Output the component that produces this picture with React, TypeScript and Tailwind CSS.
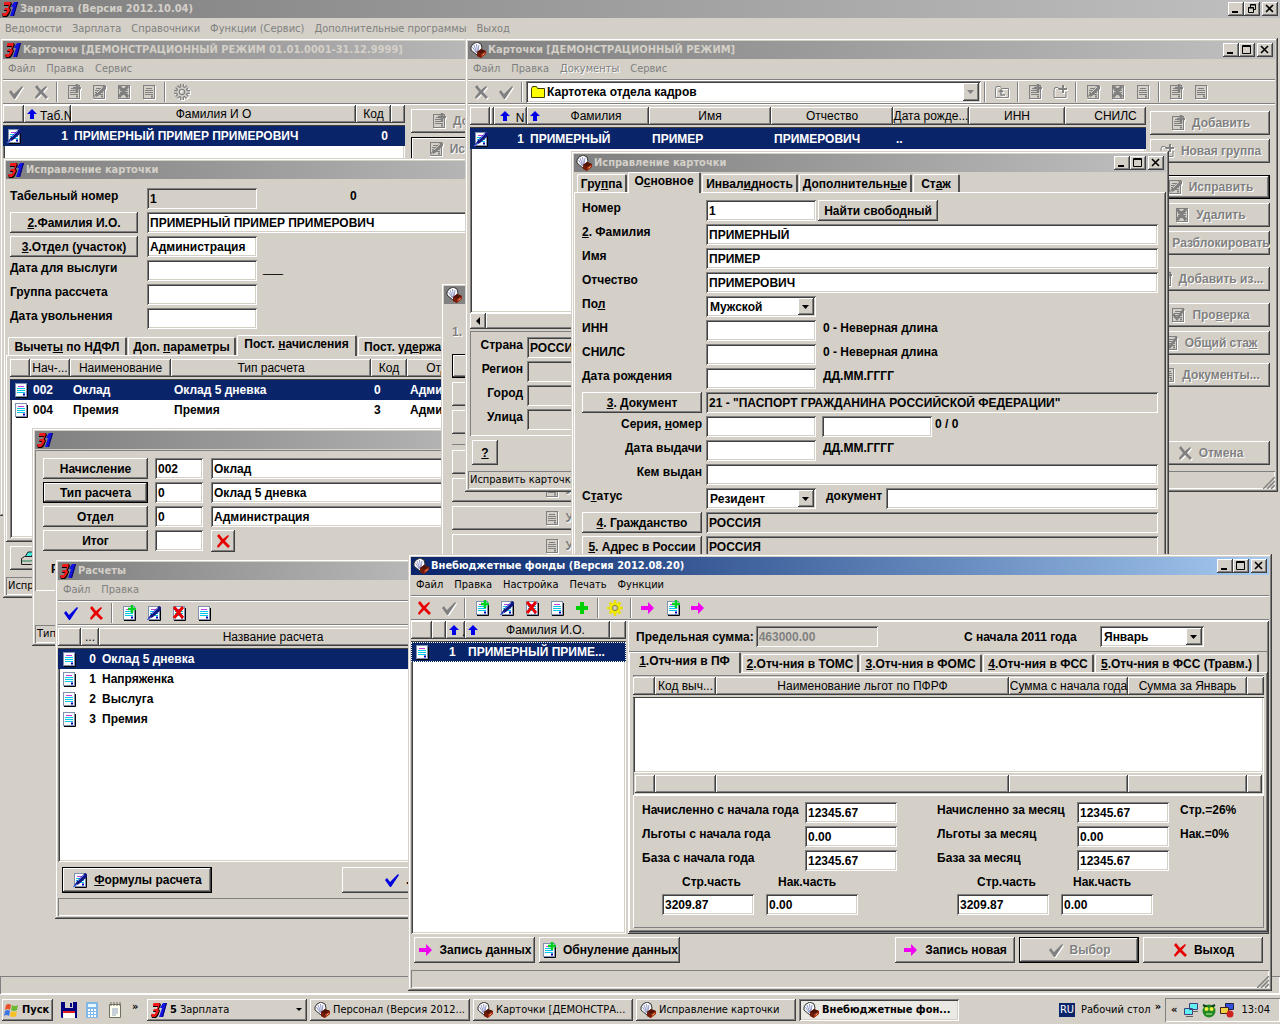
import React, { useId } from "react";

const TAHOMA = "font-['DejaVu_Sans_Condensed','DejaVu_Sans',sans-serif] text-[11px]";
const RAISED = "bg-[#d4d0c8] shadow-[inset_-1px_-1px_#404040,inset_1px_1px_#fff,inset_-2px_-2px_#808080]";
const FOCUSED = "bg-[#d4d0c8] border border-black shadow-[inset_-1px_-1px_#404040,inset_1px_1px_#fff,inset_-2px_-2px_#808080]";
const SUNKEN = "shadow-[inset_1px_1px_#808080,inset_-1px_-1px_#fff,inset_2px_2px_#404040,inset_-2px_-2px_#d4d0c8]";
const THIN = "shadow-[inset_1px_1px_#808080,inset_-1px_-1px_#fff]";
const OFF = "text-[#808080] [text-shadow:1px_1px_#fff]";

type IconName =
  | "check" | "cross" | "doc" | "docPlus" | "docPen" | "docCross" | "docCheck" | "plus" | "gear"
  | "arrow" | "folder" | "folderUp" | "folderPlus" | "up" | "printer";

function Icon({ name, off = false, className = "" }: { name: IconName; off?: boolean; className?: string }) {
  const c = (color: string) => (off ? "#808080" : color);
  const page = (
    <g>
      {!off && <path d="M3 15.500H14.500V3" fill="none" stroke="#000" />}
      <rect x="2.500" y="1.500" width="11" height="13" fill={off ? "#d4d0c8" : "#fff"} stroke={off ? "#808080" : "#8090b0"} />
      <path d="M5 4.500h6" stroke={c("#c040e0")} />
      <path d="M4 6.500h8M4 8.500h8M4 10.500h8" stroke={c("#00c8e8")} />
      <path d="M10 12.500h2" stroke={c("#0000c0")} strokeWidth="2" />
    </g>
  );
  const teeth = "M8 0v4M8 12v4M0 8h4M12 8h4M2.500 2.500l3 3M10.500 10.500l3 3M13.500 2.500l-3 3M5.500 10.500l-3 3";
  const shapes: Record<IconName, React.ReactNode> = {
    check: <path d="M1 8l2-2 3 4 8-8 1 1-8 12H6z" fill={c("#0000e0")} />,
    cross: <path d="M2 3l2-2 4 5 5-4 1 1-4 5 5 5-2 2-5-5-5 5-1-2 4-5z" fill={c("#e80000")} />,
    doc: page,
    docPlus: <g>{page}<path d="M11 0v8M7 4h8" stroke={c("#00d020")} strokeWidth="2.500" /></g>,
    docPen: (
      <g>
        {page}
        <path d="M1 15l4-6 8-8 2 1 0 3-8 7z" fill={c("#101880")} />
        <path d="M6 9l6-6M1 15l4-3" stroke={off ? "#d4d0c8" : "#5070ff"} />
      </g>
    ),
    docCross: <g>{page}<path d="M3 2l9 11M12 2L3 13" stroke={c("#e80000")} strokeWidth="3" /></g>,
    docCheck: <g>{page}<path d="M3 7l4 5 7-10" fill="none" stroke={c("#0000e0")} strokeWidth="2.500" /></g>,
    plus: <path d="M6 2h4v4h4v4h-4v4H6v-4H2V6h4z" fill={c("#00d000")} />,
    gear: off ? (
      <g fill="none">
        <path d={teeth} stroke="#808080" strokeWidth="4" />
        <circle cx="8" cy="8" r="4" stroke="#808080" strokeWidth="4" />
        <path d={teeth} stroke="#d4d0c8" strokeWidth="1.500" />
        <circle cx="8" cy="8" r="4" stroke="#d4d0c8" strokeWidth="1.500" />
      </g>
    ) : (
      <g fill="none">
        <path d={teeth} stroke="#e8e000" strokeWidth="2.500" />
        <circle cx="8" cy="8" r="4" stroke="#f0e800" strokeWidth="3" />
        <circle cx="8" cy="8" r="2.500" stroke="#808040" strokeWidth="1" />
      </g>
    ),
    arrow: <path d="M1 6h7V2l6 6-6 6V10H1z" fill={c("#f000f0")} />,
    folder: <path d="M1.500 13.500v-9l1-2h4l1 2h7v9z" fill={off ? "#d4d0c8" : "#ffff00"} stroke={off ? "#808080" : "#404000"} />,
    folderUp: (
      <g fill="none" stroke="#808080">
        <path d="M1.500 13.500v-9l1-2h4l1 2h7v9z" />
        <path d="M7 6v5h4M5 8l2-2 2 2" strokeWidth="1.500" />
      </g>
    ),
    folderPlus: (
      <g fill="none" stroke="#808080">
        <path d="M8 5.500H7l-1-2H3l-1 2v8h12V8" />
        <path d="M11 1v8M7 5h8" strokeWidth="2" />
      </g>
    ),
    up: <path d="M8 3l5 5H10v5H6V8H3z" fill="#0000e8" />,
    printer: (
      <g stroke="#202020">
        <path d="M5 7l3-5h6l-3 5z" fill="#40f0e0" />
        <path d="M1.500 8.500l3-2h9l1 2v4l-3 2h-10z" fill="#d4d0c8" />
        <path d="M2 11h9l3-2" fill="none" stroke="#208050" />
      </g>
    ),
  };
  return (
    <svg viewBox="0 0 16 16" aria-hidden="true" className={`size-4 shrink-0 ${off ? "drop-shadow-[1px_1px_0_#fff]" : ""} ${className}`}>
      {shapes[name]}
    </svg>
  );
}

function Logo({ kind }: { kind: "pay" | "cards" }) {
  if (kind === "pay")
    return (
      <svg viewBox="0 0 16 16" aria-hidden="true" className="size-4 shrink-0">
        <path d="M2 3l2-2h5l1 2-2 4 1 2-2 5-2 2H1l-1-3h4l1-3H2l1-2h3l1-3H2z" fill="#000" />
        <path d="M2 2l1-1h5l1 1-2 5 1 2-2 4-2 2H1l-1-3h4l1-3H2l1-2h3l1-3H2z" fill="#f01818" />
        <path d="M10 4l2-3h4l-4 14H8l3-9H9z" fill="#1414e0" />
        <path d="M15 1h1l-4 14h-1z" fill="#000060" />
      </svg>
    );
  return (
    <svg viewBox="0 0 16 16" aria-hidden="true" className="size-4 shrink-0">
      <path d="M1 8l0-3 2-3 4-2 4 2 1 4-3 6-2 1z" fill="#fff" stroke="#303030" />
      <path d="M2.500 5l4 6M4 3l3 8M6.500 2l1 8M9 3l-1 6" stroke="#9098c8" />
      <path d="M7 10l4-3 5 2v3l-5 4-4-2z" fill="#a02c10" />
      <path d="M7 10l4-3 5 2-5 3z" fill="#501408" />
      <path d="M7 10v4l4 2v-4z" fill="#701c08" />
      <path d="M12.500 13l2-1.500" stroke="#ffc080" />
    </svg>
  );
}

function Controls({ restore = false }: { restore?: boolean }) {
  const btn = `h-3.5 w-4 p-0 flex items-center justify-center ${RAISED}`;
  return (
    <div className="ml-auto flex shrink-0 pr-0.5">
      <button className={btn} aria-label="Свернуть">
        <svg viewBox="0 0 10 10" className="size-2.5"><path d="M1 8h6" stroke="#000" strokeWidth="2" /></svg>
      </button>
      <button className={btn} aria-label="Развернуть">
        <svg viewBox="0 0 10 10" className="size-2.5" fill="none" stroke="#000">
          {restore ? <path d="M3.500 3V.5h5v5H7M3 1h6M1.500 3.500h5v5h-5zM1 4h6" /> : <path d="M.5 .5h8v8h-8zM0 1.500h9" />}
        </svg>
      </button>
      <button className={`ml-0.5 ${btn}`} aria-label="Закрыть">
        <svg viewBox="0 0 10 10" className="size-2.5"><path d="M1 1l7 7M8 1L1 8" stroke="#000" strokeWidth="1.600" /></svg>
      </button>
    </div>
  );
}

function TitleBar({ logo, title, active = false, restore = false }: {
  logo: "pay" | "cards"; title: string; active?: boolean; restore?: boolean;
}) {
  return (
    <header
      className={`flex h-[18px] shrink-0 items-center gap-0.5 overflow-hidden whitespace-nowrap pl-0.5 font-bold ${TAHOMA} ${
        active ? "bg-linear-to-r from-[#0a246a] to-[#a6caf0] text-white" : "bg-linear-to-r from-[#808080] to-[#c0c0c0] text-[#d4d0c8]"
      }`}
    >
      <Logo kind={logo} />
      <h2>{title}</h2>
      <Controls restore={restore} />
    </header>
  );
}

function Window({ className, children }: { className: string; children: React.ReactNode }) {
  return (
    <section className={`absolute flex flex-col overflow-hidden bg-[#d4d0c8] p-[3px] shadow-[inset_-1px_-1px_#404040,inset_1px_1px_#d4d0c8,inset_-2px_-2px_#808080,inset_2px_2px_#fff] ${className}`}>
      {children}
    </section>
  );
}

function Menu({ items, active = false, etched, className = "h-5 gap-[11px]" }: { items: string[]; active?: boolean; etched?: string; className?: string }) {
  return (
    <nav className={`flex shrink-0 items-center px-[5px] ${TAHOMA} ${className}`}>
      {items.map((i) => (
        <button key={i} className={active ? "text-black" : i === etched ? OFF : "text-[#808080]"}>{i}</button>
      ))}
    </nav>
  );
}

const BAR = "flex h-[25px] shrink-0 items-center border-y border-t-[#808080] border-b-[#808080] shadow-[inset_0_1px_#fff,0_1px_#fff] mb-px";

function Tool({ name, off = false, label }: { name: IconName; off?: boolean; label: string }) {
  return (
    <button aria-label={label} className="flex h-[22px] w-[25px] shrink-0 items-center justify-center">
      <Icon name={name} off={off} />
    </button>
  );
}
const Sep = () => <i className="mx-[3px] h-5 w-0.5 shrink-0 border-l border-[#808080] bg-white" />;

function Btn({ icon, off = false, focus = false, className = "", children }: {
  icon?: IconName; off?: boolean; focus?: boolean; className?: string; children?: React.ReactNode;
}) {
  return (
    <button className={`flex shrink-0 items-center justify-center gap-1.5 overflow-hidden whitespace-nowrap font-bold ${focus ? FOCUSED : RAISED} ${off ? OFF : ""} ${className}`}>
      {icon && <Icon name={icon} off={off} />}
      {children && <span>{children}</span>}
    </button>
  );
}

function Field({ value = "", gray = false, off = false, label, id, className = "w-[110px]" }: {
  value?: string; gray?: boolean; off?: boolean; label?: string; id?: string; className?: string;
}) {
  return (
    <input
      id={id}
      aria-label={label}
      defaultValue={value}
      readOnly={gray}
      className={`h-[21px] min-w-0 rounded-none px-[3px] font-bold ${SUNKEN} ${gray ? "bg-[#d4d0c8]" : "bg-white"} ${off ? "text-[#808080]" : ""} ${className}`}
    />
  );
}

function Select({ id, label, value, className = "w-[110px]" }: { id?: string; label?: string; value: string; className?: string }) {
  return (
    <div className={`relative h-[21px] ${className}`}>
      <select id={id} aria-label={label} className={`size-full appearance-none rounded-none bg-white pl-1 font-bold ${SUNKEN}`}>
        <option>{value}</option>
      </select>
      <i className={`pointer-events-none absolute top-0.5 right-0.5 flex h-[17px] w-4 items-center justify-center ${RAISED}`}>
        <svg viewBox="0 0 8 4" className="h-1 w-2"><path d="M0 0h7L3.500 4z" /></svg>
      </i>
    </div>
  );
}

/* A 24px form line: caption on the left, controls on the right. */
function Line({ caption, button = false, right = false, cap, children }: {
  caption: React.ReactNode; button?: boolean; right?: boolean; cap: string; children: (id: string) => React.ReactNode;
}) {
  const id = useId();
  return (
    <div className="flex h-6 shrink-0 items-start">
      <div className={`flex shrink-0 ${cap} ${right ? "justify-end" : ""}`}>
        {button ? (
          <Btn className="h-[21px] w-full">{caption}</Btn>
        ) : (
          <label htmlFor={id} className="leading-4 whitespace-nowrap">{caption}</label>
        )}
      </div>
      {children(id)}
    </div>
  );
}

function Status({ text = "", grip = false, className = "" }: { text?: string; grip?: boolean; className?: string }) {
  return (
    <footer className={`flex h-[18px] shrink-0 items-center overflow-hidden pl-0.5 whitespace-nowrap ${TAHOMA} ${THIN} ${className}`}>
      {text}
      {grip && (
        <svg viewBox="0 0 12 12" aria-hidden="true" className="ml-auto size-3 self-end">
          <path d="M0 12L12 0M4 12l8-8M8 12l4-4" stroke="#808080" strokeWidth="1.500" />
        </svg>
      )}
    </footer>
  );
}

type Col = { w: string; head?: React.ReactNode; align?: string };

function Grid({ cols, rows, selected = 0, icon, className = "", height = "h-5", dotted = false }: {
  cols: Col[]; rows: React.ReactNode[][]; selected?: number; icon?: IconName; className?: string; height?: string; dotted?: boolean;
}) {
  return (
    <div className={`overflow-hidden bg-white ${SUNKEN} ${className}`}>
      <table className="w-full table-fixed border-separate border-spacing-0">
        <colgroup>{cols.map((c, i) => <col key={i} className={c.w} />)}</colgroup>
        <thead>
          <tr>
            {cols.map((c, i) => (
              <th key={i} className={`h-[18px] overflow-hidden p-0 text-center font-normal whitespace-nowrap ${RAISED}`}>{c.head}</th>
            ))}
          </tr>
          <tr aria-hidden="true"><td colSpan={cols.length} className="h-[3px] bg-[#d4d0c8] p-0 shadow-[inset_0_-1px_#404040]" /></tr>
        </thead>
        <tbody>
          {rows.map((r, y) => (
            <tr key={y} className={y === selected ? `bg-[#0a246a] text-white ${dotted ? "outline-1 -outline-offset-1 outline-dotted outline-white" : ""}` : ""}>
              {cols.map((c, i) => (
                <td key={i} className={`p-0 px-[3px] font-bold whitespace-nowrap ${height} ${c.align ?? ""}`}>
                  {i === 0 && icon ? <Icon name={icon} className="block" /> : r[i - 1]}
                </td>
              ))}
            </tr>
          ))}
        </tbody>
      </table>
    </div>
  );
}

function Tab({ active = false, className, children }: { active?: boolean; className: string; children: React.ReactNode }) {
  return (
    <button
      role="tab"
      aria-selected={active}
      className={`shrink-0 overflow-hidden rounded-t-[2px] border-t border-r-2 border-l border-t-white border-r-[#505050] border-l-white bg-[#d4d0c8] text-center font-bold whitespace-nowrap ${
        active ? "z-10 -mb-px h-[21px] pb-1" : "h-[18px]"
      } ${className}`}
    >
      {children}
    </button>
  );
}

const UpMark = () => <Icon name="up" className="inline-block size-3 align-[-2px]" />;

function PayCards() {
  return (
    <Window className="top-[38px] left-0 h-[478px] w-[536px]">
      <TitleBar logo="pay" title="Карточки [ДЕМОНСТРАЦИОННЫЙ РЕЖИМ 01.01.0001-31.12.9999]" />
      <Menu items={["Файл", "Правка", "Сервис"]} />
      <div className={BAR}>
        <Tool name="check" off label="Выбор" />
        <Tool name="cross" off label="Отмена" />
        <Sep />
        <Tool name="docPlus" off label="Добавить" />
        <Tool name="docPen" off label="Исправить" />
        <Tool name="docCross" off label="Удалить" />
        <Tool name="doc" off label="Просмотр" />
        <Sep />
        <Tool name="gear" off label="Настройка" />
      </div>
      <div className="flex min-h-0 flex-1 gap-1.5">
        <Grid
          className="w-[402px]"
          icon="docPen"
          cols={[
            { w: "w-[21px]" },
            { w: "w-[47px]", head: <><UpMark />Таб.N</>, align: "text-right" },
            { w: "w-[285px]", head: "Фамилия И О" },
            { w: "w-[35px]", head: "Код", align: "text-right" },
            { w: "w-[14px]" },
          ]}
          rows={[["1", "ПРИМЕРНЫЙ ПРИМЕР ПРИМЕРОВИЧ", "0", ""]]}
        />
        <div className="flex flex-col gap-1 pt-1">
          <Btn icon="docPlus" off className="h-6 w-[120px]">Добавить</Btn>
          <Btn icon="docPen" off focus className="h-6 w-[120px]">Исправить</Btn>
        </div>
      </div>
    </Window>
  );
}

function PayCardEdit() {
  const cap = "w-[128px] mr-[9px]";
  return (
    <Window className="top-[158px] left-[3px] h-[440px] w-[560px]">
      <TitleBar logo="pay" title="Исправление карточки" />
      <div className="flex flex-col pt-[9px] pl-1 font-bold">
        <Line cap={cap} caption="Табельный номер">
          {(id) => <><Field id={id} value="1" gray /><span className="ml-[93px] leading-4">0</span></>}
        </Line>
        <Line cap={cap} button caption={<><u>2</u>.Фамилия И.О.</>}>
          {() => <Field label="Фамилия И.О." value="ПРИМЕРНЫЙ ПРИМЕР ПРИМЕРОВИЧ" className="w-[340px]" />}
        </Line>
        <Line cap={cap} button caption={<><u>3</u>.Отдел (участок)</>}>
          {() => <Field label="Отдел" value="Администрация" />}
        </Line>
        <Line cap={cap} caption="Дата для выслуги">{(id) => <><Field id={id} /><span className="ml-1.5 leading-4 font-normal">___</span></>}</Line>
        <Line cap={cap} caption="Группа рассчета">{(id) => <Field id={id} />}</Line>
        <Line cap={cap} caption="Дата увольнения">{(id) => <Field id={id} />}</Line>
      </div>
      <div role="tablist" className="flex h-[23px] shrink-0 items-end gap-px pl-0.5">
        <Tab className="w-[119px]">Вычет<u>ы</u> по НДФЛ</Tab>
        <Tab className="w-[108px]">Доп. <u>п</u>араметры</Tab>
        <Tab active className="w-[120px]">Пост. <u>н</u>ачисления</Tab>
        <Tab className="w-[112px]">Пост. уд<u>е</u>ржания</Tab>
      </div>
      <div className={`flex h-[187px] shrink-0 p-1 ${RAISED}`}>
        <Grid
          className="flex-1"
          icon="doc"
          cols={[
            { w: "w-[20px]" },
            { w: "w-[40px]", head: "Нач-..." },
            { w: "w-[101px]", head: "Наименование" },
            { w: "w-[200px]", head: "Тип расчета" },
            { w: "w-[36px]", head: "Код" },
            { w: "w-[73px]", head: "Отдел" },
            { w: "w-auto" },
          ]}
          rows={[
            ["002", "Оклад", "Оклад 5 дневка", "0", "Администрация", ""],
            ["004", "Премия", "Премия", "3", "Администрация", ""],
          ]}
        />
      </div>
      <div className="flex flex-1 items-start px-1 pt-1"><Btn icon="printer" className="h-6 w-9" /></div>
      <Status text="Исправить карточку" />
    </Window>
  );
}

function ChargeDialog() {
  const row = "flex h-6 shrink-0 gap-[7px]";
  const lines = [
    ["Начисление", "002", "Оклад"],
    ["Тип расчета", "0", "Оклад 5 дневка"],
    ["Отдел", "0", "Администрация"],
  ];
  return (
    <Window className="top-[428px] left-[32px] h-[218px] w-[520px]">
      <TitleBar logo="pay" title="" />
      <div className={`mt-px flex h-[141px] shrink-0 flex-col pt-2 pl-2 font-bold ${THIN}`}>
        {lines.map(([name, code, text], i) => (
          <div key={name} className={row}>
            <Btn focus={i === 1} className="h-[21px] w-[105px]">{name}</Btn>
            <Field label={`${name}: код`} value={code} className="w-12" />
            <Field label={name} value={text} className="ml-px w-[236px]" />
          </div>
        ))}
        <div className={row}>
          <Btn className="h-[21px] w-[105px]">Итог</Btn>
          <Field label="Итог" className="w-12" />
          <button aria-label="Очистить" className={`ml-px flex h-[22px] w-6 items-center justify-center ${RAISED}`}><Icon name="cross" /></button>
        </div>
        <p className="mt-2 pl-2">Расчет</p>
      </div>
      <Status text="Тип расчета" className="mt-auto" />
    </Window>
  );
}

function StaffWindow() {
  return (
    <Window className="top-[283px] left-[441px] h-[320px] w-[300px]">
      <TitleBar logo="cards" title="" />
      <div className="flex flex-col px-2">
        <p className={`mt-5 mb-3.5 font-bold leading-4 ${OFF}`}>1.</p>
        <Btn focus className="h-6 w-[232px]" />
        <div className="mt-1 flex flex-col gap-1">
          {[0, 1].map((i) => <Btn key={i} className="h-6 w-[232px]" />)}
        </div>
        <div className="mt-2.5 flex w-[232px] flex-col gap-1 border-t border-[#808080] pt-[5px]">
          {[0, 1, 2, 3].map((i) => <Btn key={i} icon="doc" off className="h-6 w-[232px]">Учет</Btn>)}
        </div>
      </div>
    </Window>
  );
}

function PersonnelCards() {
  const b = "h-6 w-[120px]";
  return (
    <Window className="top-[38px] right-0.5 left-[465px] h-[454px]">
      <TitleBar logo="cards" title="Карточки [ДЕМОНСТРАЦИОННЫЙ РЕЖИМ]" />
      <Menu items={["Файл", "Правка", "Документы", "Сервис"]} etched="Документы" />
      <div className={BAR}>
        <Tool name="cross" off label="Отмена" />
        <Tool name="check" off label="Выбор" />
        <Sep />
        <label className={`relative flex h-[22px] min-w-0 flex-1 items-center bg-white pl-1 ${SUNKEN}`}>
          <Icon name="folder" />
          <select aria-label="Картотека" className="min-w-0 flex-1 appearance-none pl-px font-bold"><option>Картотека отдела кадров</option></select>
          <i className={`pointer-events-none absolute top-0.5 right-0.5 flex h-[18px] w-4 items-center justify-center ${RAISED}`}>
            <svg viewBox="0 0 8 4" className="h-1 w-2"><path d="M0 0h7L3.500 4z" fill="#808080" /></svg>
          </i>
        </label>
        <div className="flex w-[294px] shrink-0 items-center">
          <Sep /><Tool name="folderUp" off label="Вверх" />
          <Sep /><Tool name="docPlus" off label="Добавить" /><Tool name="folderPlus" off label="Новая группа" />
          <Sep /><Tool name="docPen" off label="Исправить" /><Tool name="docCross" off label="Удалить" /><Tool name="doc" off label="Просмотр" />
          <Sep /><Tool name="docPlus" off label="Добавить из" /><Tool name="doc" off label="Документы" />
        </div>
      </div>
      <div className="flex min-h-0 flex-1 gap-1 pt-0.5 pr-[5px]">
        <div className="flex min-w-0 flex-1 flex-col pl-0.5">
          <Grid
            className="h-[206px] shrink-0"
            height="h-[21px]"
            icon="docPen"
            cols={[
              { w: "w-[20px]" },
              { w: "w-[4px]" },
              { w: "w-[33px]", head: <><UpMark /> N</>, align: "text-right" },
              { w: "w-[122px]", head: <span className="flex items-center"><UpMark /><span className="flex-1">Фамилия</span></span> },
              { w: "w-[122px]", head: "Имя" },
              { w: "w-[122px]", head: "Отчество" },
              { w: "w-[76px]", head: "Дата рожде..." },
              { w: "w-[96px]", head: "ИНН" },
              { w: "w-auto", head: <span className="pl-5">СНИЛС</span> },
            ]}
            rows={[["", "1", "ПРИМЕРНЫЙ", "ПРИМЕР", "ПРИМЕРОВИЧ", "..", "", ""]]}
          />
          <div className="flex h-4 shrink-0">
            <button aria-label="Влево" className={`flex h-4 w-4 items-center justify-center ${RAISED}`}>
              <svg viewBox="0 0 4 8" className="h-2 w-1"><path d="M4 0v8L0 4z" /></svg>
            </button>
            <i className={`flex-1 ${RAISED}`} />
          </div>
          <div className={`mt-0.5 flex flex-1 flex-col pt-1.5 font-bold ${THIN}`}>
            {["Страна", "Регион", "Город", "Улица"].map((l, i) => (
              <Line key={l} cap="w-[53px] mr-1" right caption={l}>
                {(id) => <Field id={id} gray value={i === 0 ? "РОССИЯ" : ""} className="w-[300px]" />}
              </Line>
            ))}
          </div>
          <Btn className="mt-1 mb-1.5 ml-0.5 h-[25px] w-[26px]"><u>?</u></Btn>
        </div>
        <div className="flex flex-col gap-1 pt-1">
          <Btn icon="docPlus" off className={b}>Добавить</Btn>
          <Btn icon="folderPlus" off className={b}>Новая группа</Btn>
          <Btn icon="docPen" off focus className={`mt-2 ${b}`}>Исправить</Btn>
          <Btn icon="docCross" off className={b}>Удалить</Btn>
          <Btn icon="doc" off className={b}>Разблокировать</Btn>
          <Btn icon="docPlus" off className={`mt-2 ${b}`}>Добавить из...</Btn>
          <Btn icon="docCheck" off className={`mt-2 ${b}`}>Про<u>в</u>ерка</Btn>
          <Btn icon="docCheck" off className={b}>Общий ста<u>ж</u></Btn>
          <Btn icon="doc" off className={`mt-1 ${b}`}>Документы...</Btn>
          <Btn icon="cross" off className={`mt-auto mb-1.5 ${b}`}>Отмена</Btn>
        </div>
      </div>
      <Status text="Исправить карточку" grip />
    </Window>
  );
}

function PersonnelEdit() {
  const cap = "w-[120px] mr-1";
  const wide = "flex-1";
  return (
    <Window className="top-[151px] right-[111px] left-[571px] h-[440px]">
      <TitleBar logo="cards" title="Исправление карточки" />
      <div role="tablist" className="flex h-5 shrink-0 items-end gap-px pl-[3px]">
        <Tab className="w-[50px]">Гру<u>п</u>па</Tab>
        <Tab active className="w-[73px]">О<u>с</u>новное</Tab>
        <Tab className="w-[96px]">Инвал<u>и</u>дность</Tab>
        <Tab className="w-[113px]">Дополнительн<u>ы</u>е</Tab>
        <Tab className="w-[47px]">Ст<u>а</u>ж</Tab>
      </div>
      <div className={`flex flex-1 flex-col pt-2 pr-2 pl-2 font-bold ${RAISED}`}>
        <Line cap={cap} caption="Номер">
          {(id) => <><Field id={id} value="1" /><Btn className="ml-0.5 h-[21px] w-[120px]">Найти свободный</Btn></>}
        </Line>
        <Line cap={cap} caption={<><u>2</u>. Фамилия</>}>{(id) => <Field id={id} value="ПРИМЕРНЫЙ" className={wide} />}</Line>
        <Line cap={cap} caption="Имя">{(id) => <Field id={id} value="ПРИМЕР" className={wide} />}</Line>
        <Line cap={cap} caption="Отчество">{(id) => <Field id={id} value="ПРИМЕРОВИЧ" className={wide} />}</Line>
        <Line cap={cap} caption={<>По<u>л</u></>}>{(id) => <Select id={id} value="Мужской" />}</Line>
        <Line cap={cap} caption="ИНН">{(id) => <><Field id={id} /><span className="ml-[7px] leading-4">0 - Неверная длина</span></>}</Line>
        <Line cap={cap} caption="СНИЛС">{(id) => <><Field id={id} /><span className="ml-[7px] leading-4">0 - Неверная длина</span></>}</Line>
        <Line cap={cap} caption="Дата рождения">{(id) => <><Field id={id} /><span className="ml-[7px] leading-4">ДД.ММ.ГГГГ</span></>}</Line>
        <Line cap={cap} button caption={<><u>3</u>. Документ</>}>
          {() => <Field label="Документ" gray value={'21 - "ПАСПОРТ ГРАЖДАНИНА РОССИЙСКОЙ ФЕДЕРАЦИИ"'} className={wide} />}
        </Line>
        <Line cap={cap} right caption={<>Серия, <u>н</u>омер</>}>
          {(id) => <><Field id={id} /><Field label="Номер документа" className="ml-1.5 w-[110px]" /><span className="ml-[3px] leading-4">0 / 0</span></>}
        </Line>
        <Line cap={cap} right caption="Дата выдачи">{(id) => <><Field id={id} /><span className="ml-[7px] leading-4">ДД.ММ.ГГГГ</span></>}</Line>
        <Line cap={cap} right caption="Кем выдан">{(id) => <Field id={id} className={wide} />}</Line>
        <Line cap={cap} caption={<>С<u>т</u>атус</>}>
          {(id) => (
            <>
              <Select id={id} value="Резидент" />
              <label htmlFor="statusDoc" className="mr-1 ml-2.5 leading-4">документ</label>
              <Field id="statusDoc" className={wide} />
            </>
          )}
        </Line>
        <Line cap={cap} button caption={<><u>4</u>. Гражданство</>}>{() => <Field label="Гражданство" gray value="РОССИЯ" className={wide} />}</Line>
        <Line cap={cap} button caption={<><u>5</u>. Адрес в России</>}>{() => <Field label="Адрес в России" gray value="РОССИЯ" className={wide} />}</Line>
      </div>
    </Window>
  );
}

function Calculations() {
  return (
    <Window className="top-[559px] left-[55px] h-[360px] w-[410px]">
      <TitleBar logo="pay" title="Расчеты" />
      <Menu items={["Файл", "Правка"]} />
      <div className={BAR}>
        <Tool name="check" label="Выбор" />
        <Tool name="cross" label="Отмена" />
        <Sep />
        <Tool name="docPlus" label="Добавить" />
        <Tool name="docPen" label="Исправить" />
        <Tool name="docCross" label="Удалить" />
        <Tool name="doc" label="Просмотр" />
      </div>
      <Grid
        className="mt-0.5 min-h-0 flex-1"
        icon="doc"
        cols={[
          { w: "w-[23px]" },
          { w: "w-[18px]", head: "...", align: "text-right" },
          { w: "w-[348px]", head: "Название расчета" },
          { w: "w-auto" },
        ]}
        rows={[["0", "Оклад 5 дневка", ""], ["1", "Напряженка", ""], ["2", "Выслуга", ""], ["3", "Премия", ""]]}
      />
      <div className="flex h-9 shrink-0 items-center justify-between px-1">
        <Btn icon="docPen" focus className="h-[26px] w-[150px]"><u>Ф</u>ормулы расчета</Btn>
        <Btn icon="check" className="h-[26px] w-[116px]">...</Btn>
      </div>
      <Status />
    </Window>
  );
}

function Totals({ rows, share, side }: { rows: [string, string, string?][]; share: string; side: string }) {
  return (
    <div className={side}>
      {rows.map(([l, v, note]) => (
        <Line key={l} cap={share} caption={l}>
          {(id) => <><Field id={id} value={v} className="w-[92px]" />{note && <span className="ml-[11px] leading-4">{note}</span>}</>}
        </Line>
      ))}
      <div className="flex gap-3 pl-5">
        {[["Стр.часть", "3209.87", "pl-5"], ["Нак.часть", "0.00", "pl-3"]].map(([l, v, pad]) => (
          <label key={l} className="flex w-[92px] flex-col gap-1 leading-4">
            <span className={pad}>{l}</span>
            <Field value={v} className="w-full" />
          </label>
        ))}
      </div>
    </div>
  );
}

function Funds() {
  const cols = ["w-[20px]", "w-[61px]", "flex-1", "w-[119px]", "w-[119px]", "w-[15px]"];
  return (
    <Window className="top-[554px] right-2 left-[408px] h-[437px]">
      <TitleBar logo="cards" title="Внебюджетные фонды (Версия 2012.08.20)" active />
      <Menu active items={["Файл", "Правка", "Настройка", "Печать", "Функции"]} />
      <div className={BAR}>
        <Tool name="cross" label="Отмена" />
        <Tool name="check" off label="Выбор" />
        <Sep />
        <Tool name="docPlus" label="Добавить" />
        <Tool name="docPen" label="Исправить" />
        <Tool name="docCross" label="Удалить" />
        <Tool name="doc" label="Просмотр" />
        <Tool name="plus" label="Плюс" />
        <Sep />
        <Tool name="gear" label="Настройка" />
        <Sep />
        <Tool name="arrow" label="Запись" />
        <Tool name="docPlus" label="Обнуление" />
        <Tool name="arrow" label="Запись новая" />
      </div>
      <div className="flex min-h-0 flex-1 gap-0.5">
        <Grid
          className="w-[215px] shrink-0"
          icon="doc"
          dotted
          cols={[
            { w: "w-[21px]" },
            { w: "w-[14px]" },
            { w: "w-[19px]", head: <><UpMark />.</> },
            { w: "w-[145px]", head: <span className="flex items-center"><UpMark /><span className="flex-1">Фамилия И.О.</span></span> },
            { w: "w-auto" },
          ]}
          rows={[["", "1", "ПРИМЕРНЫЙ ПРИМЕ...", ""]]}
        />
        <div className={`flex min-w-0 flex-1 flex-col p-px pb-0.5 font-bold ${RAISED}`}>
          <div className="flex h-[30px] shrink-0 items-center border-b border-[#808080] pl-[7px]">
            <label htmlFor="limit" className="mr-0.5">Предельная сумма:</label>
            <Field id="limit" gray off value="463000.00" className="w-[122px]" />
            <label htmlFor="month" className="ml-auto w-[136px]">С начала 2011 года</label>
            <Select id="month" value="Январь" className="mr-[64px] w-[104px]" />
          </div>
          <div role="tablist" className="flex h-5 shrink-0 items-end gap-px">
            <Tab active className="w-[112px]"><u>1</u>.Отч-ния в ПФ</Tab>
            <Tab className="w-[117px]"><u>2</u>.Отч-ния в ТОМС</Tab>
            <Tab className="w-[122px]"><u>3</u>.Отч-ния в ФОМС</Tab>
            <Tab className="w-[111px]"><u>4</u>.Отч-ния в ФСС</Tab>
            <Tab className="w-[164px]"><u>5</u>.Отч-ния в ФСС (Травм.)</Tab>
          </div>
          <div className={`flex min-h-0 flex-1 flex-col px-1 pt-[3px] ${RAISED}`}>
            <div className={`flex h-[120px] shrink-0 flex-col pt-0.5 ${THIN}`}>
              <Grid
                className="h-24 shrink-0"
                cols={[
                  { w: "w-[22px]" },
                  { w: "w-[61px]", head: "Код выч..." },
                  { w: "w-auto", head: "Наименование льгот по ПФРФ" },
                  { w: "w-[119px]", head: "Сумма с начала года" },
                  { w: "w-[119px]", head: "Сумма за Январь" },
                  { w: "w-[17px]" },
                ]}
                rows={[]}
              />
              <div className="mt-0.5 flex h-[18px] shrink-0 px-0.5">
                {cols.map((w, i) => <i key={i} className={`${w} ${RAISED}`} />)}
              </div>
            </div>
            <div className="mb-1 flex flex-1 pt-[7px] pl-[9px] shadow-[inset_1px_1px_#fff,inset_-1px_-1px_#808080]">
              <Totals
                side="w-[295px]"
                share="w-[163px]"
                rows={[["Начисленно с начала года", "12345.67"], ["Льготы с начала года", "0.00"], ["База с начала года", "12345.67"]]}
              />
              <Totals
                side="flex-1"
                share="w-[140px]"
                rows={[["Начисленно за месяц", "12345.67", "Стр.=26%"], ["Льготы за месяц", "0.00", "Нак.=0%"], ["База за месяц", "12345.67"]]}
              />
            </div>
          </div>
        </div>
      </div>
      <div className="flex h-9 shrink-0 items-start gap-1 pt-[3px] pr-1.5 pl-[3px]">
        <Btn icon="arrow" className="h-[26px] w-[121px]">Запись данных</Btn>
        <Btn icon="docPlus" className="h-[26px] w-[141px]">Обнуление данных</Btn>
        <Btn icon="arrow" className="ml-auto h-[26px] w-[120px]">Запись новая</Btn>
        <Btn icon="check" off focus className="h-[26px] w-[120px]">Выбор</Btn>
        <Btn icon="cross" className="h-[26px] w-[120px]">Выход</Btn>
      </div>
      <Status grip />
    </Window>
  );
}

function Task({ logo, active = false, children }: { logo: "pay" | "cards"; active?: boolean; children: React.ReactNode }) {
  return (
    <button
      className={`flex h-[22px] w-40 min-w-0 items-center gap-[3px] overflow-hidden px-1 text-left whitespace-nowrap ${
        active ? `bg-[#ebe9e4] font-bold ${SUNKEN}` : RAISED
      }`}
    >
      <Logo kind={logo} />
      {children}
    </button>
  );
}

function Taskbar() {
  return (
    <div className={`flex h-[30px] shrink-0 items-center gap-1 border-t border-white bg-[#d4d0c8] pl-0.5 ${TAHOMA}`}>
      <button className={`flex h-[22px] w-[51px] shrink-0 items-center gap-0.5 px-0.5 font-bold ${RAISED}`}>
        <svg viewBox="0 0 16 16" aria-hidden="true" className="size-4">
          <path d="M2 3q3-2 5 0L6 8Q4 6 1 8z" fill="#e8502a" />
          <path d="M8 3q3 2 6 0l-1 5q-3 2-6 0z" fill="#6cb830" />
          <path d="M1 9q3-2 5 0l-1 5q-3-2-5 0z" fill="#3c78e0" />
          <path d="M7 9q3 2 6 0l-1 5q-3 2-6 0z" fill="#f8c020" />
        </svg>
        Пуск
      </button>
      <div className="flex w-[86px] shrink-0 items-center gap-[7px] pl-1">
        <button aria-label="Сохранить">
          <svg viewBox="0 0 16 16" className="size-4">
            <path d="M0 0h16v16H1l-1-1z" fill="#000080" />
            <path d="M4 0h8v6H4z" fill="#d4d0c8" /><path d="M9 1h2v4H9z" fill="#000080" />
            <path d="M2 9h12v7H2z" fill="#fff" /><path d="M2 9h12v2H2z" fill="#e02020" />
          </svg>
        </button>
        <button aria-label="Калькулятор">
          <svg viewBox="0 0 16 16" className="size-4">
            <path d="M2 0h12v16H2z" fill="#80b8e8" /><path d="M4 2h8v3H4z" fill="#e8f8ff" />
            <path d="M4 8h8M4 11h8M4 14h8" stroke="#fff" strokeWidth="2" strokeDasharray="2 1" />
          </svg>
        </button>
        <button aria-label="Блокнот">
          <svg viewBox="0 0 16 16" className="size-4">
            <path d="M2.500 2.500h11v13h-11z" fill="#fffff0" stroke="#707060" />
            <path d="M4 0v4M7 0v4M10 0v4M13 0v4" stroke="#707060" /><path d="M5 7h6M5 9h6M5 11h6M5 13h4" stroke="#90a0c0" />
          </svg>
        </button>
        <span className="-mt-1.5 ml-0.5 font-bold">»</span>
      </div>
      <div className="flex min-w-0 flex-1 gap-[3px]">
        <Task logo="pay">
          <b>5</b> Зарплата
          <svg viewBox="0 0 8 4" aria-hidden="true" className="ml-auto h-1 w-2"><path d="M1 0h6L4 3z" /></svg>
        </Task>
        <Task logo="cards">Персонал (Версия 2012...</Task>
        <Task logo="cards">Карточки [ДЕМОНСТРА...</Task>
        <Task logo="cards">Исправление карточки</Task>
        <Task logo="cards" active>Внебюджетные фон...</Task>
      </div>
      <span className="bg-[#0a246a] px-px leading-[14px] text-white">RU</span>
      <span className="ml-0.5 whitespace-nowrap">Рабочий стол</span>
      <span className="-mt-1.5 font-bold">»</span>
      <div className={`flex h-6 items-center gap-0.5 pr-2.5 pl-1.5 ${THIN}`}>
        <span className="mr-1 font-bold">«</span>
        <svg viewBox="0 0 16 16" aria-hidden="true" className="size-4">
          <path d="M6.500 1.500h8v6h-8zM1.500 6.500h8v6h-8z" fill="#60f0f0" stroke="#404080" /><path d="M3 14.500h7M9 9.500h6" stroke="#606060" />
        </svg>
        <svg viewBox="0 0 16 16" aria-hidden="true" className="size-4">
          <circle cx="8" cy="9" r="6.500" fill="#208820" /><path d="M2 3l4 2M14 3l-4 2" stroke="#104010" strokeWidth="2" />
          <circle cx="5.500" cy="7" r="2" fill="#f0f040" /><circle cx="10.500" cy="7" r="2" fill="#f0f040" /><path d="M5 12h6" stroke="#c0f0a0" />
        </svg>
        <svg viewBox="0 0 16 16" aria-hidden="true" className="size-4">
          <path d="M6.500 1.500h8v6h-8z" fill="#3050e0" stroke="#202040" /><path d="M1.500 5.500h8v6h-8z" fill="#f0d040" stroke="#402020" />
          <circle cx="11" cy="12" r="3.500" fill="#d02020" />
        </svg>
        <time className="ml-1">13:04</time>
      </div>
    </div>
  );
}

export default function App() {
  return (
    <main className="relative flex h-screen flex-col overflow-hidden bg-[#d4d0c8] font-['Liberation_Sans',Arial,sans-serif] text-[12px] leading-[14px] text-black">
      <TitleBar logo="pay" title="Зарплата (Версия 2012.10.04)" restore />
      <Menu
        items={["Ведомости", "Зарплата", "Справочники", "Функции (Сервис)", "Дополнительные программы", "Выход"]}
        className="h-[21px] gap-2.5"
      />
      <div className="flex-1">
        <PayCards />
        <PayCardEdit />
        <ChargeDialog />
        <Calculations />
        <StaffWindow />
        <PersonnelCards />
        <PersonnelEdit />
        <Funds />
      </div>
      <Status />
      <Taskbar />
    </main>
  );
}
